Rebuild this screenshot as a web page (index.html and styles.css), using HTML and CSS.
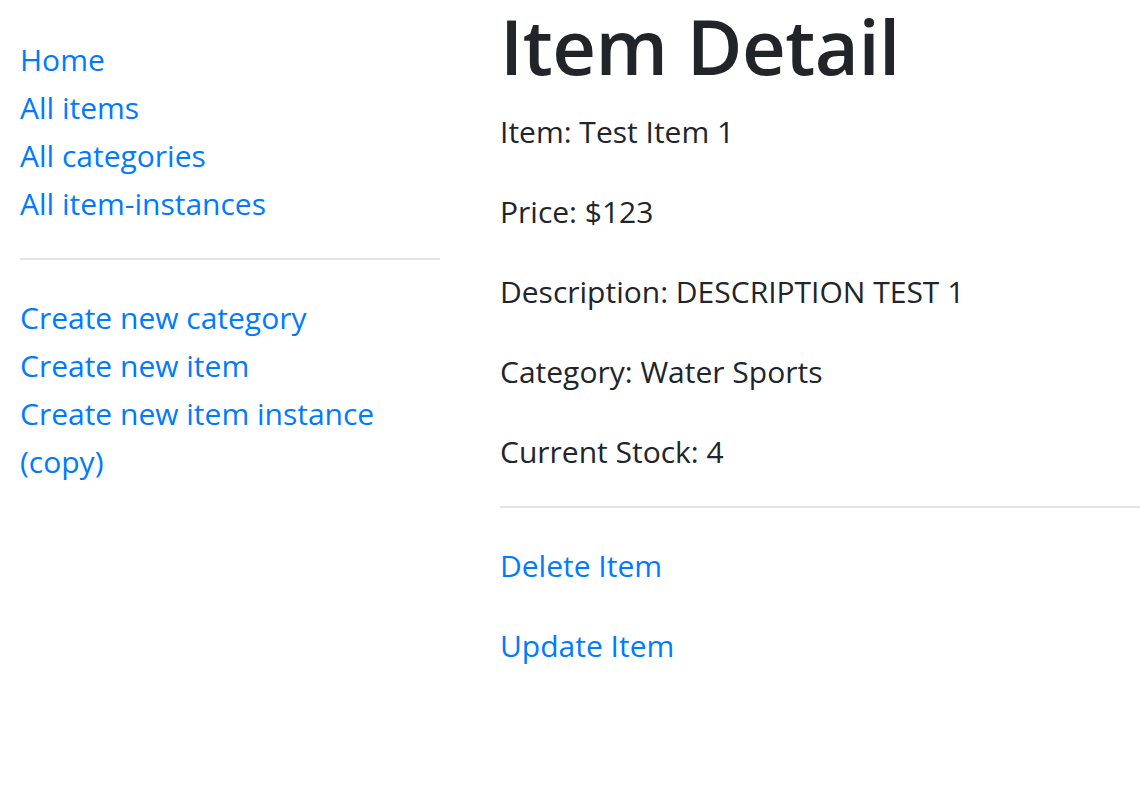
FILE: index.html
```html
<!DOCTYPE html>
<html lang="en">
<head>
<meta charset="utf-8">
<title>Item Detail</title>
<link rel="stylesheet" href="styles.css">
</head>
<body>
<div class="page">
  <aside class="sidebar">
    <ul class="nav-list">
      <li><a href="#">Home</a></li>
      <li><a href="#">All items</a></li>
      <li><a href="#">All categories</a></li>
      <li><a href="#">All item-instances</a></li>
    </ul>
    <hr class="divider">
    <ul class="nav-list">
      <li><a href="#">Create new category</a></li>
      <li><a href="#">Create new item</a></li>
      <li><a href="#">Create new item instance (copy)</a></li>
    </ul>
  </aside>
  <main class="content">
    <h1 class="title">Item Detail</h1>
    <div class="fields">
      <p>Item: Test Item 1</p>
      <p>Price: $123</p>
      <p>Description: DESCRIPTION TEST 1</p>
      <p>Category: Water Sports</p>
      <p>Current Stock: 4</p>
    </div>
    <hr class="divider">
    <div class="fields">
      <p><a href="#">Delete Item</a></p>
      <p><a href="#">Update Item</a></p>
    </div>
  </main>
</div>
</body>
</html>
```
FILE: styles.css
```css
html, body {
  margin: 0;
  padding: 0;
  background: #fff;
}
body {
  font-family: "Open Sans", "Noto Sans", sans-serif;
  font-size: 30px;
  line-height: 48px;
  color: #212529;
}
a {
  color: #007bff;
  text-decoration: none;
}
.page {
  display: flex;
  padding-left: 20px;
  overflow: hidden;
}
.sidebar {
  width: 420px;
  flex: 0 0 420px;
  display: flex;
  flex-direction: column;
}
.nav-list {
  list-style: none;
  margin: 0;
  padding: 0;
}
.sidebar .nav-list:first-child {
  margin-top: 36px;
}
.divider {
  border: 0;
  border-top: 2px solid #e4e4e4;
  margin: 30px 0 34px;
  height: 0;
}
.content {
  flex: 1 1 auto;
  margin-left: 60px;
  display: flex;
  flex-direction: column;
}
.title {
  font-size: 76px;
  font-weight: 600;
  line-height: 92px;
  margin: 0;
  letter-spacing: -0.5px;
}
.fields {
  display: flex;
  flex-direction: column;
  gap: 32px;
}
.title + .fields {
  margin-top: 16px;
}
.fields p {
  margin: 0;
}
```
